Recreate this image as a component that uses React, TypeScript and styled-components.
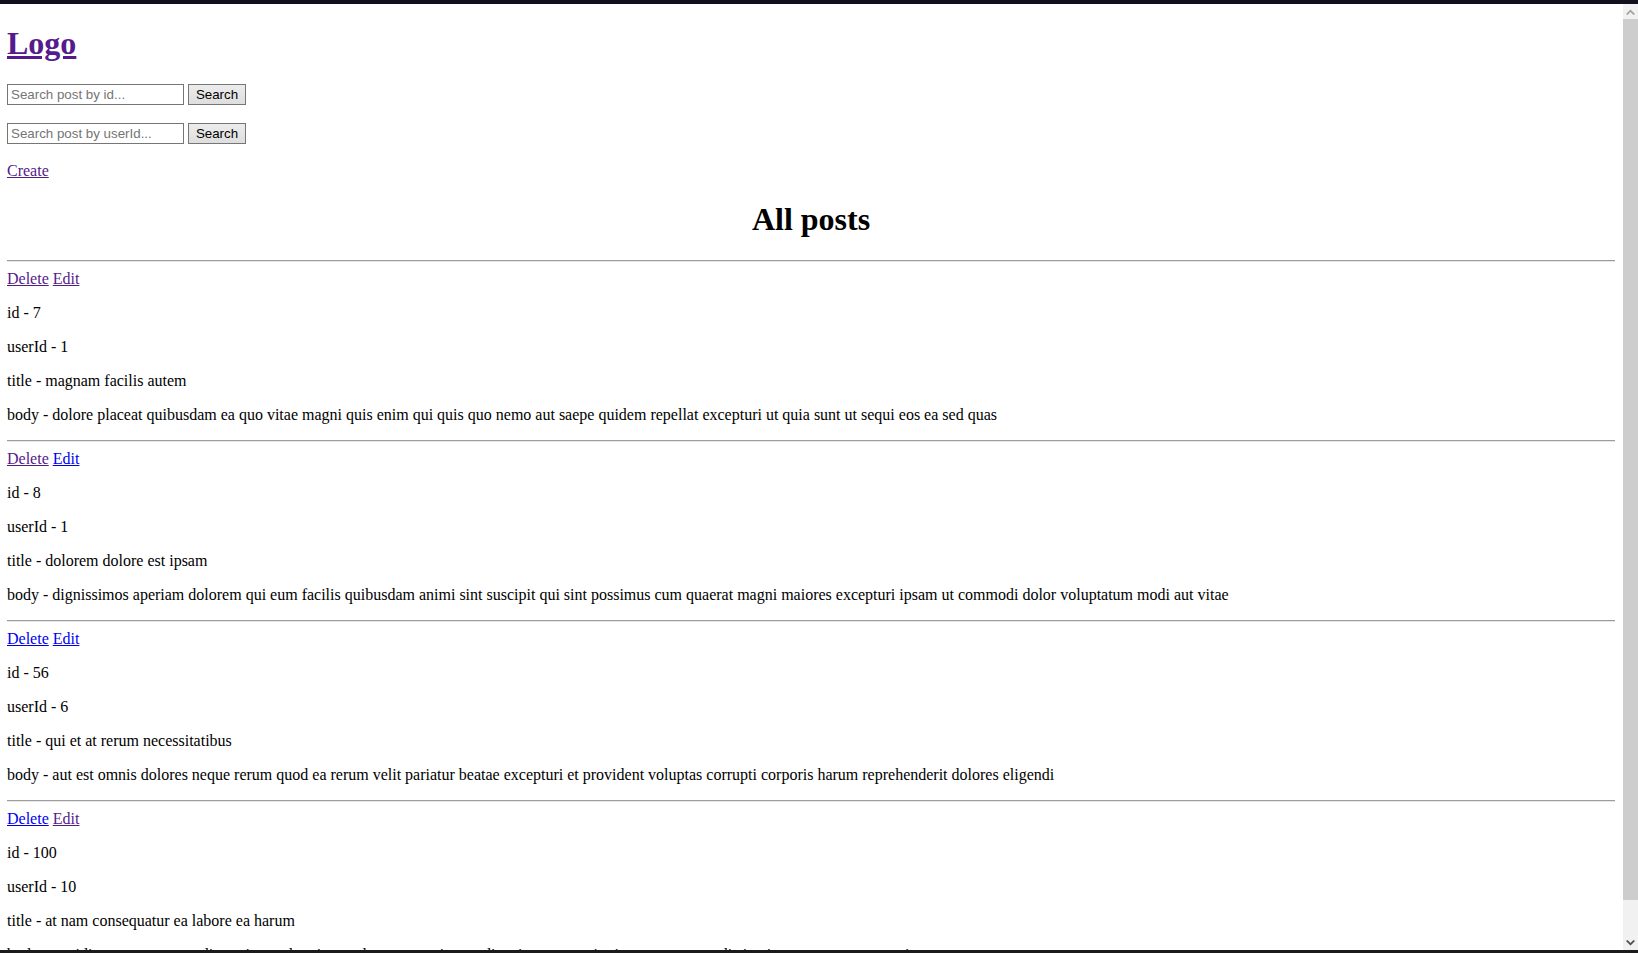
import React from "react";
import styled, { createGlobalStyle } from "styled-components";

type Post = {
  id: number;
  userId: number;
  title: string;
  body: string;
  deleteVisited: boolean;
  editVisited: boolean;
};

const posts: Post[] = [
  {
    id: 7,
    userId: 1,
    title: "magnam facilis autem",
    body: "dolore placeat quibusdam ea quo vitae magni quis enim qui quis quo nemo aut saepe quidem repellat excepturi ut quia sunt ut sequi eos ea sed quas",
    deleteVisited: true,
    editVisited: true,
  },
  {
    id: 8,
    userId: 1,
    title: "dolorem dolore est ipsam",
    body: "dignissimos aperiam dolorem qui eum facilis quibusdam animi sint suscipit qui sint possimus cum quaerat magni maiores excepturi ipsam ut commodi dolor voluptatum modi aut vitae",
    deleteVisited: true,
    editVisited: false,
  },
  {
    id: 56,
    userId: 6,
    title: "qui et at rerum necessitatibus",
    body: "aut est omnis dolores neque rerum quod ea rerum velit pariatur beatae excepturi et provident voluptas corrupti corporis harum reprehenderit dolores eligendi",
    deleteVisited: false,
    editVisited: false,
  },
  {
    id: 100,
    userId: 10,
    title: "at nam consequatur ea labore ea harum",
    body: "cupiditate quo est a modi nesciunt soluta ipsa voluptas error itaque dicta in autem qui minus magnam et distinctio eum accusamus ratione error aut",
    deleteVisited: false,
    editVisited: true,
  },
];

const GlobalStyle = createGlobalStyle`
  html, body {
    margin: 0;
    padding: 0;
    overflow: hidden;
    background: #ffffff;
  }
`;

const Frame = styled.div`
  height: 953px;
  display: flex;
  flex-direction: column;
  background: #ffffff;
`;

const TopBar = styled.div`
  height: 4px;
  background: #10101c;
`;

const BottomBar = styled.div`
  height: 3px;
  background: #1b1b1b;
`;

const Viewport = styled.div`
  flex: 1;
  min-height: 0;
  display: flex;
`;

const Page = styled.main`
  flex: 1;
  min-width: 0;
  overflow: hidden;
  padding: 0 8px 0 7px;
  font-family: "Liberation Serif", "Times New Roman", serif;
  font-size: 16px;
  color: #000000;
`;

const Scrollbar = styled.div`
  width: 15px;
  display: flex;
  flex-direction: column;
  background: #f1f1f1;
`;

const ArrowButton = styled.div`
  height: 15px;
  display: flex;
  align-items: center;
  justify-content: center;
  background: #f1f1f1;
`;

const Thumb = styled.div`
  height: 881px;
  background: #cdcdcd;
`;

const Track = styled.div`
  flex: 1;
`;

const Link = styled.a<{ $visited?: boolean }>`
  color: ${(p) => (p.$visited ? "#551a8b" : "#0000ee")};
  text-decoration: underline;
  cursor: pointer;
`;

const Title = styled.h1<{ $center?: boolean }>`
  font-size: 2em;
  font-weight: bold;
  margin: 0.67em 0;
  text-align: ${(p) => (p.$center ? "center" : "left")};
`;

const SearchForm = styled.form`
  display: flex;
  align-items: flex-start;
  gap: 4px;
  height: 23px;
  margin: 0 0 16px;
`;

const SearchInput = styled.input`
  box-sizing: border-box;
  width: 177px;
  height: 21px;
  padding: 1px 3px;
  border: 1px solid #767676;
  border-radius: 0;
  font-family: "Liberation Sans", Arial, sans-serif;
  font-size: 13.333px;
  color: #000000;
  background: #ffffff;
  outline: none;

  &::placeholder {
    color: #757575;
  }
`;

const SearchButton = styled.button`
  box-sizing: border-box;
  width: 58px;
  height: 21px;
  padding: 1px 6px;
  border: 1px solid #767676;
  border-radius: 0;
  background: linear-gradient(#ececec, #dedede);
  font-family: "Liberation Sans", Arial, sans-serif;
  font-size: 13.333px;
  color: #000000;
`;

const Paragraph = styled.p`
  margin: 16px 0;
`;

const Divider = styled.hr`
  margin: 8px 0;
  height: 0;
  border: none;
  border-top: 1px solid #9d9d9d;
  border-bottom: 1px solid #e6e6e6;
`;

const Actions = styled.div`
  display: flex;
  gap: 4px;
`;

function Chevron({ up, color }: { up: boolean; color: string }) {
  return (
    <svg width="9" height="6" viewBox="0 0 9 6">
      <path
        d={up ? "M0 5 L4.5 0.5 L9 5 L7.5 6 L4.5 3 L1.5 6 Z" : "M0 1 L4.5 5.5 L9 1 L7.5 0 L4.5 3 L1.5 0 Z"}
        fill={color}
      />
    </svg>
  );
}

function PostItem({ post }: { post: Post }) {
  return (
    <article>
      <Divider />
      <Actions>
        <Link $visited={post.deleteVisited}>Delete</Link>
        <Link $visited={post.editVisited}>Edit</Link>
      </Actions>
      <Paragraph>id - {post.id}</Paragraph>
      <Paragraph>userId - {post.userId}</Paragraph>
      <Paragraph>title - {post.title}</Paragraph>
      <Paragraph>body - {post.body}</Paragraph>
    </article>
  );
}

export default function App() {
  return (
    <Frame>
      <GlobalStyle />
      <TopBar />
      <Viewport>
        <Page>
          <Title>
            <Link $visited>Logo</Link>
          </Title>
          <SearchForm onSubmit={(e) => e.preventDefault()}>
            <SearchInput placeholder="Search post by id..." />
            <SearchButton type="submit">Search</SearchButton>
          </SearchForm>
          <SearchForm onSubmit={(e) => e.preventDefault()}>
            <SearchInput placeholder="Search post by userId..." />
            <SearchButton type="submit">Search</SearchButton>
          </SearchForm>
          <Paragraph>
            <Link $visited>Create</Link>
          </Paragraph>
          <Title $center>All posts</Title>
          {posts.map((post) => (
            <PostItem key={post.id} post={post} />
          ))}
        </Page>
        <Scrollbar>
          <ArrowButton>
            <Chevron up color="#a3a3a3" />
          </ArrowButton>
          <Thumb />
          <Track />
          <ArrowButton>
            <Chevron up={false} color="#505050" />
          </ArrowButton>
        </Scrollbar>
      </Viewport>
      <BottomBar />
    </Frame>
  );
}
